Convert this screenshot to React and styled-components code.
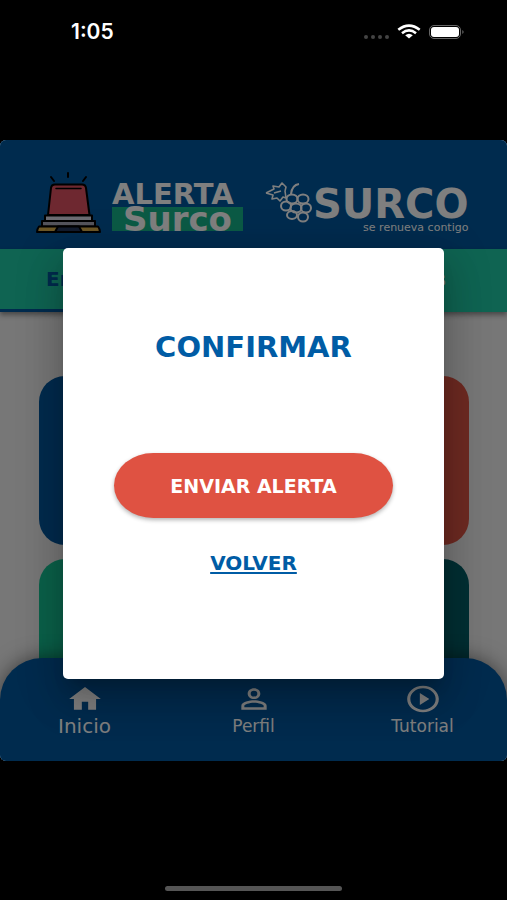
import React from "react";
import styled, { createGlobalStyle } from "styled-components";
import { MdHome, MdPersonOutline, MdPlayCircleOutline } from "react-icons/md";

const GlobalStyle = createGlobalStyle`
* {
    box-sizing: border-box;
}
body {
    margin: 0;
    background-color: #000;
    font-family: "DejaVu Sans", sans-serif;
}
button {
    border: none;
    background: none;
    padding: 0;
    font-family: inherit;
    cursor: pointer;
}
`

const Telefono = styled.div`
display: flex;
flex-direction: column;
min-height: 100vh;
`
const BarraEstado = styled.div`
display: flex;
justify-content: space-between;
align-items: flex-start;
padding: 20px 42px 0 71px;
height: 140px;
color: white;
`
const Hora = styled.span`
font-family: Inter, sans-serif;
font-size: 21px;
line-height: 24px;
font-weight: 600;
`
const Pantalla = styled.div`
position: relative;
background-color: #eee;
border-radius: 6px;
overflow: hidden;
`
const Encabezado = styled.header`
display: flex;
align-items: flex-start;
padding: 32px 36px 0;
height: 109px;
background-color: #00569c;
color: #fff;
`
const LogoAlerta = styled.div`
width: 131px;
margin: 9px 22px 0 11px;
font-weight: bold;
`
const TextoAlerta = styled.div`
font-size: 29px;
line-height: 26px;
white-space: nowrap;
`
const TextoSurco = styled.div`
background-color: #16b48a;
font-size: 34px;
line-height: 24px;
height: 24px;
text-align: center;
`
const LogoSurco = styled.div`
display: flex;
align-items: flex-start;
margin-top: 10px;
`
const MarcaSurco = styled.div`
display: flex;
flex-direction: column;
align-items: flex-end;
padding-top: 3px;
`
const NombreSurco = styled.div`
font-size: 40px;
line-height: 38px;
font-weight: bold;
`
const LemaSurco = styled.div`
font-size: 11px;
line-height: 10px;
`
const Pestanas = styled.div`
display: flex;
position: relative;
background-color: #1ec8a4;
box-shadow: 0 3px 5px rgba(0, 0, 0, 0.4);
`
const Pestana = styled.button`
flex: 1;
height: 63px;
padding: 0 61px 0 46px;
text-align: ${props => props.$activa ? "left" : "right"};
font-size: 20px;
font-weight: 700;
color: ${props => props.$activa ? "#00569c" : "#fff"};
border-bottom: 3px solid ${props => props.$activa ? "#00569c" : "transparent"};
`
const Tarjetas = styled.main`
display: grid;
grid-template-columns: 1fr 1fr;
gap: 14px;
padding: 64px 38px 0 39px;
`
const Tarjeta = styled.button`
height: 169px;
border-radius: 26px;
background-color: ${props => props.$color};
`
const Navegacion = styled.nav`
display: grid;
grid-template-columns: repeat(3, 1fr);
position: relative;
margin-top: -70px;
height: 103px;
padding-top: 25px;
border-radius: 42px 42px 0 0;
background-color: #00569c;
box-shadow: 0 0 20px rgba(0, 0, 0, 0.5);
`
const Enlace = styled.a`
display: flex;
flex-direction: column;
align-items: center;
color: #fff;
text-decoration: none;
font-size: ${props => props.$activo ? "20px" : "17px"};
line-height: 22px;
svg {
    width: 38px;
    height: 32px;
}
`
const Fondo = styled.div`
position: absolute;
inset: 0;
display: flex;
justify-content: center;
align-items: flex-start;
padding-top: 108px;
background-color: rgba(0, 0, 0, 0.5);
`
const Dialogo = styled.div`
display: flex;
flex-direction: column;
align-items: center;
width: 75%;
padding: 80px 51px 103px;
border-radius: 5px;
background-color: #fff;
box-shadow: 0 11px 15px -7px rgba(0, 0, 0, 0.2), 0 24px 38px 3px rgba(0, 0, 0, 0.14), 0 9px 46px 8px rgba(0, 0, 0, 0.12);
`
const Titulo = styled.h2`
margin: 0 0 87px;
font-size: 29px;
line-height: 38px;
font-weight: 700;
color: #005ca5;
`
const BotonEnviar = styled.button`
width: 100%;
height: 65px;
border-radius: 40px / 33px;
background-color: #df5242;
color: #fff;
font-size: 19px;
font-weight: 700;
box-shadow: 0 2px 4px rgba(0, 0, 0, 0.3);
`
const BotonVolver = styled.button`
margin-top: 33px;
font-size: 20px;
line-height: 25px;
font-weight: 700;
color: #005ca5;
text-decoration: underline;
text-decoration-thickness: 2px;
text-underline-offset: 2px;
`
const BarraInicio = styled.div`
width: 35%;
height: 5px;
margin: auto auto 9px;
border-radius: 3px;
background-color: #555;
`

const IconosEstado = () => (
    <svg width="102" height="24" viewBox="0 0 102 24" aria-hidden="true">
        <g fill="#444">
            <circle cx="3" cy="17" r="2" />
            <circle cx="10" cy="17" r="2" />
            <circle cx="17" cy="17" r="2" />
            <circle cx="24" cy="17" r="2" />
        </g>
        <g fill="none" stroke="#fff" strokeWidth="2.6">
            <path d="M35.3 9.7Q46 1.5 56.7 9.7" />
            <path d="M39 13.2Q46 7.6 53 13.2" />
        </g>
        <path d="M42.2 15.3Q46 12.3 49.8 15.3L46 18.6Z" fill="#fff" />
        <rect x="66.5" y="5.5" width="31" height="13" rx="4.5" fill="none" stroke="#666" />
        <rect x="68" y="7" width="28" height="10" rx="3" fill="#fff" />
        <path d="M99.3 10Q102 12 99.3 14Z" fill="#666" />
    </svg>
)

const Sirena = () => (
    <svg width="65" height="62" viewBox="0 0 65 62" aria-hidden="true">
        <g stroke="#000" strokeWidth="2" strokeLinejoin="round" strokeLinecap="round">
            <path d="M15 5l3 4M32 1v4M50 5l-3 4" />
            <path d="M12 43L15 16Q15.5 12.5 19 12.5H46Q49.5 12.5 50 16L53.5 43Z" fill="#dc5060" />
            <path d="M20 16.5H45" strokeWidth="1.5" />
            <path d="M9 43.5H56V49H9Z" fill="#d8d8e4" />
            <path d="M6 49H59V54.5H6Z" fill="#a9a9b8" />
            <path d="M3 54.5H62Q64 57 64 60H1Q1 57 3 54.5Z" fill="#d9ae4c" />
            <path d="M22 54.5H43L46 60H19Z" fill="#24365a" />
        </g>
    </svg>
)

const Uvas = () => (
    <svg width="48" height="42" viewBox="0 0 48 42" fill="none" stroke="#fff" strokeWidth="2" strokeLinejoin="round" aria-hidden="true">
        <path d="M1 11L9 7L8 4L14 5L17 1L21 5L20 9M1 11L8 13L7 17L12 16L15 19L18 15L21 16L20 9M9 11L16 9" strokeWidth="1.6" />
        <path d="M34 2Q27 3 26 12" />
        <ellipse cx="27" cy="17" rx="5.5" ry="4.5" />
        <ellipse cx="38" cy="17" rx="5.5" ry="4.5" />
        <ellipse cx="21" cy="24" rx="5" ry="4.5" />
        <ellipse cx="31" cy="26" rx="5.5" ry="4.5" />
        <ellipse cx="41" cy="26" rx="5" ry="4.5" />
        <ellipse cx="27" cy="33" rx="5" ry="4" />
        <ellipse cx="38" cy="35" rx="5" ry="4.5" />
    </svg>
)

const tarjetas = [
    { nombre: "Serenazgo", color: "#00569c" },
    { nombre: "Bomberos", color: "#dc5444" },
    { nombre: "Ambulancia", color: "#16c294" },
    { nombre: "Violencia", color: "#005e66" }
]

export default class App extends React.Component {
    state = {
        confirmar: true
    }
    abrirDialogo = () => {
        this.setState({ confirmar: true })
    }
    cerrarDialogo = () => {
        this.setState({ confirmar: false })
    }
    renderizaDialogo = () => {
        return <Fondo>
            <Dialogo role="dialog" aria-modal="true" aria-labelledby="titulo">
                <Titulo id="titulo">CONFIRMAR</Titulo>
                <BotonEnviar onClick={this.cerrarDialogo}>ENVIAR ALERTA</BotonEnviar>
                <BotonVolver onClick={this.cerrarDialogo}>VOLVER</BotonVolver>
            </Dialogo>
        </Fondo>
    }
    render() {
        return (
            <Telefono>
                <GlobalStyle />
                <BarraEstado>
                    <Hora>1:05</Hora>
                    <IconosEstado />
                </BarraEstado>
                <Pantalla>
                    <Encabezado>
                        <Sirena />
                        <LogoAlerta>
                            <TextoAlerta>ALERTA</TextoAlerta>
                            <TextoSurco>Surco</TextoSurco>
                        </LogoAlerta>
                        <LogoSurco>
                            <Uvas />
                            <MarcaSurco>
                                <NombreSurco>SURCO</NombreSurco>
                                <LemaSurco>se renueva contigo</LemaSurco>
                            </MarcaSurco>
                        </LogoSurco>
                    </Encabezado>
                    <Pestanas>
                        <Pestana $activa>Emergencias</Pestana>
                        <Pestana>Servicios</Pestana>
                    </Pestanas>
                    <Tarjetas>
                        {tarjetas.map(tarjeta => (
                            <Tarjeta
                                key={tarjeta.nombre}
                                $color={tarjeta.color}
                                aria-label={tarjeta.nombre}
                                onClick={this.abrirDialogo}
                            />
                        ))}
                    </Tarjetas>
                    <Navegacion>
                        <Enlace href="#inicio" $activo><MdHome preserveAspectRatio="none" />Inicio</Enlace>
                        <Enlace href="#perfil"><MdPersonOutline preserveAspectRatio="none" />Perfil</Enlace>
                        <Enlace href="#tutorial"><MdPlayCircleOutline preserveAspectRatio="none" />Tutorial</Enlace>
                    </Navegacion>
                    {this.state.confirmar && this.renderizaDialogo()}
                </Pantalla>
                <BarraInicio />
            </Telefono>
        )
    }
}
